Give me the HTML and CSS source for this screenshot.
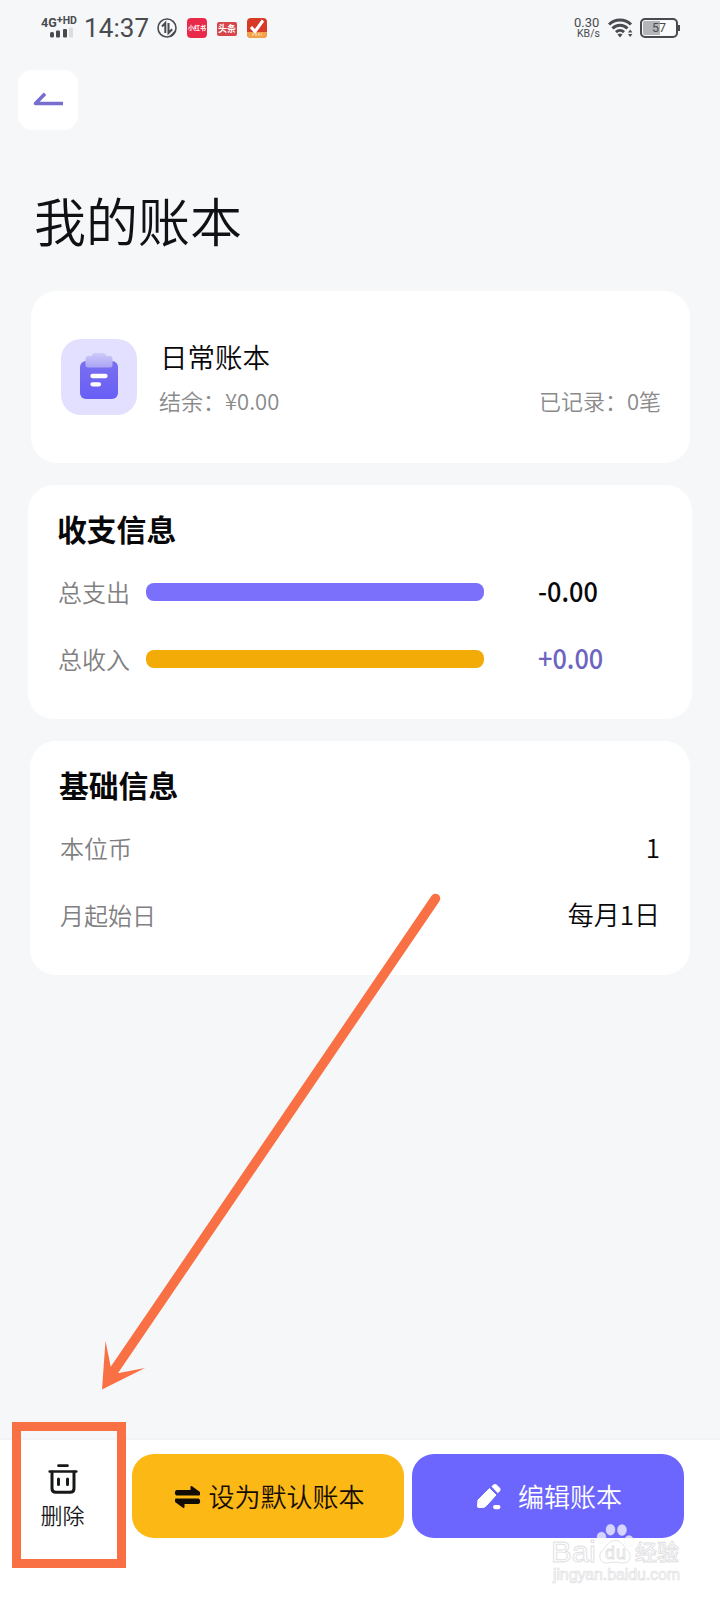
FILE: index.html
```html
<!DOCTYPE html>
<html lang="zh-CN">
<head>
<meta charset="utf-8">
<title>我的账本</title>
<link rel="stylesheet" href="styles.css">
</head>
<body>
<div class="page">
  <header class="status">
    <div class="signal">
      <div class="net"><span class="net-g">4G</span><span class="net-plus">+</span><span class="net-hd">HD</span></div>
      <svg class="bars" width="26" height="11" viewBox="0 0 26 11"><g fill="#4a4b4f"><rect x="0" y="5" width="4" height="5.500" rx="1.500"/><rect x="6" y="3.500" width="4" height="7" rx="1"/><rect x="13" y="2" width="4" height="8.500" rx="1"/></g><rect x="19" y="0.500" width="4" height="10" rx="1" fill="#dcdde0"/></svg>
    </div>
    <div class="clock">14:37</div>
    <svg class="st-icon data" width="20" height="20" viewBox="0 0 20 20"><circle cx="10" cy="10" r="9" fill="none" stroke="#4a4b4f" stroke-width="1.600"/><path d="M5 8.500L8.300 5v10M11.500 5v10l3.700-3.700" fill="none" stroke="#4a4b4f" stroke-width="2"/><path d="M12 18.500l6.500-6.500-1 4-2.500 2.500z" fill="#4a4b4f"/></svg>
    <div class="app app-red">小红书</div>
    <div class="app app-news">头条</div>
    <svg class="st-icon" width="20" height="20" viewBox="0 0 20 20"><rect width="20" height="20" rx="4" fill="#d83a28"/><path d="M0 14h20v2a4 4 0 0 1-4 4H4a4 4 0 0 1-4-4z" fill="#f3a24c"/><path d="M4 9l4 4.500L16 2.500" fill="none" stroke="#fff" stroke-width="3"/><path d="M5 16.500h10" stroke="#f9d3a0" stroke-width="2" stroke-dasharray="2 1"/></svg>
    <div class="status-gap"></div>
    <div class="speed"><div class="rate">0.30</div><div class="unit">KB/s</div></div>
    <svg class="wifi" width="26" height="20" viewBox="0 0 26 20"><g fill="none" stroke="#4a4b4f" stroke-width="3"><path d="M1 6.500a15.500 15.500 0 0 1 22 0"/><path d="M4.500 10.500a10.500 10.500 0 0 1 15 0"/><path d="M8 14.200a5.800 5.800 0 0 1 8 0"/></g><path d="M9.500 16.500q2.500-2 5 0L12 19.500z" fill="#4a4b4f"/><path d="M20 14.500l2.200-3 2.200 3zM20 16l2.200 3 2.200-3z" fill="#4a4b4f"/></svg>
    <div class="battery"><span>57</span></div>
  </header>

  <button class="back"><svg width="30" height="16" viewBox="0 0 30 16"><path d="M30 11.500H2.500L12 1.800" fill="none" stroke="#776ed0" stroke-width="3.600" stroke-linejoin="round"/></svg></button>
  <h1 class="title">我的账本</h1>

  <section class="card book">
    <svg class="book-icon" width="76" height="76" viewBox="0 0 76 76">
      <defs>
        <linearGradient id="pad" x1="0" y1="0" x2="0" y2="1"><stop offset="0" stop-color="#7a70ee"/><stop offset="1" stop-color="#685ef6"/></linearGradient>
        <linearGradient id="clip" x1="0" y1="0" x2="0" y2="1"><stop offset="0" stop-color="#cfcafa"/><stop offset="1" stop-color="#aaa4f4"/></linearGradient>
      </defs>
      <rect width="76" height="76" rx="20" fill="#e2e0fe"/>
      <rect x="19" y="22" width="38" height="38" rx="6" fill="url(#pad)"/>
      <path d="M24.500 20q0-3 3-3h3q1-3 4-3h7q3 0 4 3h3q3 0 3 3v6q0 2.500-2.500 2.500H27q-2.500 0-2.500-2.500z" fill="url(#clip)"/>
      <path d="M31.500 37h13M31.500 45.300h6.500" stroke="#fff" stroke-width="4.300" stroke-linecap="round"/>
    </svg>
    <div class="book-info">
      <div class="book-name">日常账本</div>
      <div class="book-meta"><span>结余：¥0.00</span><span>已记录：0笔</span></div>
    </div>
  </section>

  <section class="card flow">
    <h2>收支信息</h2>
    <div class="row"><span class="label">总支出</span><span class="bar out"></span><b class="amount">-0.00</b></div>
    <div class="row"><span class="label">总收入</span><span class="bar in"></span><b class="amount plus">+0.00</b></div>
  </section>

  <section class="card base">
    <h2>基础信息</h2>
    <div class="row"><span class="label">本位币</span><span class="value">1</span></div>
    <div class="row"><span class="label">月起始日</span><span class="value">每月1日</span></div>
  </section>

  <footer class="actions">
    <button class="delete">
      <svg width="30" height="30" viewBox="0 0 30 30"><g fill="none" stroke="#17181a" stroke-linecap="round"><path d="M10.500 1.700h9M1.700 7.500h26.600" stroke-width="2.700"/><path d="M4 8v16.500q0 3.800 4 3.800h14q4 0 4-3.800V8" stroke-width="3"/><path d="M10.500 15v5.500M19.500 15v5.500" stroke-width="3"/></g></svg>
      <span>删除</span>
    </button>
    <button class="btn default">
      <svg width="27" height="24" viewBox="0 0 27 24"><g fill="#120c06" stroke="#120c06" stroke-width="2" stroke-linejoin="round"><path d="M2.500 6h15V2l7.500 5.500V9.500H2.500q-1.300-1.700 0-3.500z"/><path d="M24.500 18h-15v4L2 16.500V14.500h22.500q1.300 1.700 0 3.500z"/></g></svg>
      <span>设为默认账本</span>
    </button>
    <button class="btn edit">
      <svg width="24" height="27" viewBox="0 0 24 27"><path d="M1 17L12.500 5.500l6.500 6.500L9.500 22.500Q8 24.500 5.500 24.500H1.500Q.5 24.500.5 23.500z" fill="#fff" stroke="#fff" stroke-linejoin="round"/><path d="M14.500 3.500l2-2q1.500-1.200 3 0l3.500 3.500q1.200 1.500 0 3l-2.200 2.200z" fill="#fff"/><rect x="16" y="22" width="7.500" height="4.200" rx="2.100" fill="#fff"/></svg>
      <span>编辑账本</span>
    </button>
  </footer>

  <svg class="watermark" width="136" height="66" viewBox="0 0 136 66">
    <g fill="#ffffff" fill-opacity=".7" stroke="#e0e0e2" stroke-width=".9">
      <text x="5" y="38" font-size="30" textLength="45" lengthAdjust="spacingAndGlyphs">Bai</text>
      <path d="M69 16.500c6 0 8 5 12 9 6 6 3 14-4 13.500-3-.3-5-1-8-1s-5 .7-8 1c-7 .5-10-7.500-4-13.500 4-4 6-9 12-9z"/>
      <text x="59" y="35" font-size="18" textLength="21">du</text>
      <text class="cjk" x="89" y="36" font-size="22" font-weight="500">经验</text>
      <text x="7" y="56" font-size="16" stroke-width=".7" textLength="127">jingyan.baidu.com</text>
    </g>
    <g fill="#fff" fill-opacity=".72" stroke="#e4e4e8" stroke-opacity=".5" stroke-width=".7"><ellipse cx="55.500" cy="13.500" rx="4.500" ry="5.500"/><ellipse cx="64.500" cy="5.700" rx="4.500" ry="5.500"/><ellipse cx="76" cy="6" rx="4.500" ry="5.500"/><ellipse cx="83" cy="17" rx="4.500" ry="5.500"/></g>
  </svg>
  <svg class="arrow" width="720" height="1600" viewBox="0 0 720 1600"><path d="M435.500 898.500L115 1369" stroke="#f87044" stroke-width="9.500" stroke-linecap="round"/><path d="M102 1389.500L105.500 1341 111 1368 119 1373 145 1368z" fill="#f87044"/></svg>
  <div class="highlight"></div>
</div>
</body>
</html>
```

FILE: styles.css
```css
* { box-sizing: border-box; }
body { margin: 0; background: #f5f7f9; font-family: "Noto Sans CJK SC", sans-serif; }
h1, h2 { margin: 0; }
button { border: 0; padding: 0; background: none; font: inherit; }
svg { display: block; flex: none; }
.page { position: relative; width: 720px; height: 1600px; overflow: hidden; display: flex; flex-direction: column; color: #08080a; font-weight: 350; }

.status { display: flex; height: 70px; padding: 17px 42px 0 41px; color: #4a4b4f; font-family: Roboto, sans-serif; font-weight: 400; }
.signal { width: 43px; }
.net { display: flex; height: 11px; line-height: 11px; font-weight: 700; }
.net-g { font-size: 12.500px; line-height: 12px; }
.net-plus { font-size: 11px; line-height: 6px; }
.net-hd { font-size: 10.500px; line-height: 8px; }
.bars { margin: -1px 0 0 9px; }
.clock { width: 70px; font-size: 26px; line-height: 22px; letter-spacing: .1px; white-space: nowrap; }
.st-icon { margin-top: 1px; }
.data { margin: 1px 10px 0 3px; }
.app { width: 20px; height: 20px; margin: 1px 10px 0 0; color: #fff; text-align: center; white-space: nowrap; font: 700 6px/20px "Noto Sans CJK SC", sans-serif; }
.app-red { border-radius: 4px; background: #e9294a; }
.app-news { height: 14px; margin-top: 5px; border-radius: 2px; background: #d6474b; font-size: 9px; line-height: 13px; }
.status-gap { flex: 1; }
.speed { width: 34px; }
.rate { height: 12px; font-size: 13px; line-height: 12px; }
.unit { height: 10px; padding-left: 3px; font-size: 10.500px; line-height: 10px; }
.wifi { margin: 1px 6px 0 0; }
.battery { position: relative; width: 38px; height: 20px; margin: 1px 0 0; border: 2px solid #4a4b4f; border-radius: 5px; background: linear-gradient(90deg, #b3b5b8 52%, #fbfbfc 52%); box-shadow: inset 0 0 0 1px #f5f7f9; font-size: 12.500px; line-height: 16px; text-align: center; }
.battery::after { content: ""; position: absolute; right: -4px; top: 5px; width: 2px; height: 6px; background: #4a4b4f; }

.back { width: 60px; height: 60px; margin-left: 18px; border-radius: 14px; background: #fff; display: flex; align-items: center; justify-content: center; }
.title { height: 60px; margin: 60px 0 0 34px; font-size: 52px; line-height: 60px; font-weight: 350; color: #101114; }

.card { background: #fff; border-radius: 26px; }
.book { display: flex; width: 659px; height: 172px; margin: 41px 0 0 31px; padding: 48px 29px 0 30px; }
.book-info { flex: 1; margin: -1px 0 0 22px; }
.book-name { padding-left: 1px; font-size: 27.500px; line-height: 36px; }
.book-meta { display: flex; justify-content: space-between; margin-top: 11px; font-size: 22px; line-height: 30px; color: #8a8a8b; }

h2 { font-size: 29.800px; line-height: 36px; font-weight: 700; }
.row { display: flex; align-items: center; height: 67px; }
.label { font-size: 24px; color: #808082; }
.flow { width: 664px; height: 234px; margin: 22px 0 0 28px; padding: 25px 30px 0 29px; }
.flow h2 { margin-bottom: 12px; }
.flow .label { width: 89px; padding-left: 1px; }
.bar { width: 338px; height: 18px; border-radius: 8px; }
.out { background: #7a70fb; }
.in { background: #f3ab08; }
.amount { margin: 0 0 4px 54px; font-size: 27.500px; line-height: 36px; font-weight: 500; transform: scaleX(.92); transform-origin: left; }
.plus { color: #6c64bf; }

.base { width: 660px; height: 234px; margin: 22px 0 0 30px; padding: 25px 30px 0; }
.base h2 { margin: 0 0 12px -1px; }
.base .row { justify-content: space-between; }
.value { margin-bottom: 2px; font-size: 26px; }

.actions { display: flex; height: 160px; margin-top: auto; padding: 14px 36px 0 12px; background: #fff; box-shadow: 0 -1px 2px #eef0f2; }
.delete { width: 101px; height: 84px; margin-right: 19px; padding-top: 10px; display: flex; flex-direction: column; align-items: center; font-size: 22px; line-height: 30px; color: #17181a; }
.delete span { margin-top: 5px; }
.btn { flex: 1; height: 84px; padding: 0 0 1px 3px; border-radius: 22px; display: flex; align-items: center; justify-content: center; font-size: 26px; }
.btn span { margin-bottom: 1px; }
.default { background: #fcb814; color: #150d05; gap: 7px; }
.edit { margin-left: 8px; background: #6d66fe; color: #fff; gap: 17px; }
.btn svg { margin-top: 2px; }

.watermark { position: absolute; left: 546px; top: 1524px; font-family: "Liberation Sans", sans-serif; }
.cjk { font-family: "Noto Sans CJK SC", sans-serif; }
.arrow { position: absolute; left: 0; top: 0; }
.highlight { position: absolute; left: 12px; top: 1422px; width: 114px; height: 146px; border: 9px solid #f87044; }
```
